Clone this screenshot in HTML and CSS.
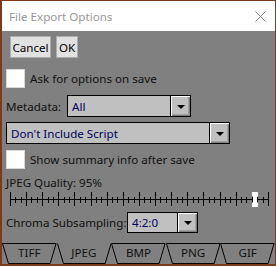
FILE: index.html
```html
<!DOCTYPE html>
<html lang="en">
<head>
  <meta charset="UTF-8">
  <title>File Export Options</title>
  <link rel="stylesheet" href="styles.css">
</head>
<body>
<div class="window">
  <div class="titlebar">
    <span class="title">File Export Options</span>
    <svg class="close" width="11" height="11" viewBox="0 0 11 11">
      <path d="M0.5 0.5 L10.5 10.5 M10.5 0.5 L0.5 10.5" stroke="#8a8a8a" stroke-width="1" fill="none"/>
    </svg>
  </div>

  <div class="content">
    <div class="buttons">
      <button class="btn btn-cancel">Cancel</button>
      <button class="btn btn-ok">OK</button>
    </div>

    <label class="check check-first"><span class="box"></span>Ask for options on save</label>

    <div class="row meta">
      <span class="label-meta">Metadata:</span>
      <div class="select sel-meta"><span class="value">All</span><span class="drop"></span></div>
    </div>

    <div class="row script">
      <div class="select sel-script"><span class="value">Don't Include Script</span><span class="drop"></span></div>
    </div>

    <label class="check check-second"><span class="box"></span>Show summary info after save</label>

    <div class="quality">JPEG Quality: 95%</div>
    <div class="slider">
      <svg class="thumb" width="6" height="15" viewBox="0 0 6 15">
        <polygon points="0,0 6,0 6,4 5,5 5,10 6,11 6,15 0,15 0,11 1,10 1,5 0,4" fill="#fff"/>
      </svg>
    </div>

    <div class="row chroma">
      <span class="label-chroma">Chroma Subsampling:</span>
      <div class="select sel-chroma"><span class="value">4:2:0</span><span class="drop"></span></div>
    </div>
  </div>

  <div class="tabs">
    <div class="tab"><svg viewBox="0 0 55 21" preserveAspectRatio="none"><polyline points="0.5,0.5 6.5,20.5 48.5,20.5 54.5,0.5 0.5,0.5"/></svg><span>TIFF</span></div>
    <div class="tab active"><svg viewBox="0 0 55 21" preserveAspectRatio="none"><polyline points="0.5,0.5 6.5,20.5 48.5,20.5 54.5,0.5"/></svg><span>JPEG</span></div>
    <div class="tab"><svg viewBox="0 0 55 21" preserveAspectRatio="none"><polyline points="0.5,0.5 6.5,20.5 48.5,20.5 54.5,0.5 0.5,0.5"/></svg><span>BMP</span></div>
    <div class="tab"><svg viewBox="0 0 55 21" preserveAspectRatio="none"><polyline points="0.5,0.5 6.5,20.5 48.5,20.5 54.5,0.5 0.5,0.5"/></svg><span>PNG</span></div>
    <div class="tab"><svg viewBox="0 0 55 21" preserveAspectRatio="none"><polyline points="0.5,0.5 6.5,20.5 48.5,20.5 54.5,0.5 0.5,0.5"/></svg><span>GIF</span></div>
  </div>
</div>
</body>
</html>
```

FILE: styles.css
```css
body { margin: 0; background: #7a3a1c; font: 11.6px "Noto Sans", sans-serif; color: #111; white-space: nowrap; }

.window { margin: 1px 0 0 2px; width: 273px; height: 263px; background: #808080; display: flex; flex-direction: column; }

.titlebar { height: 30px; flex: none; background: #fff; display: flex; align-items: center; justify-content: space-between; padding: 0 9px 0 7px; color: #999; }
.close { display: block; }

.content { padding-left: 4px; display: flex; flex-direction: column; align-items: flex-start; }

.buttons { margin: 5px 0 0 4px; display: flex; gap: 5px; }
.btn { font: inherit; color: #000; height: 22px; padding: 0; background: #e1e1e1; border: 1px solid #adadad; }
.btn-cancel { width: 41px; }
.btn-ok { width: 22px; }

.check { height: 19px; display: flex; align-items: center; gap: 5px; }
.check-first { margin-top: 11px; }
.check-second { margin-top: 6px; }
.box { width: 19px; height: 19px; box-sizing: border-box; background: #fff; border: 1px solid #d8d8d8; }

.row { display: flex; align-items: center; }
.meta { margin-top: 7px; height: 22px; }
.script { margin-top: 5px; height: 22px; }
.chroma { margin-top: 5px; height: 21px; }
.label-meta { width: 61px; flex: none; }
.label-chroma { width: 121px; flex: none; }

.select { box-sizing: border-box; height: 100%; border: 1px solid #000; background: #c0c0c0; display: flex; color: #00005a; }
.sel-meta { width: 124px; }
.sel-script { width: 224px; }
.sel-chroma { width: 71px; }
.value { flex: 1; padding-left: 4px; display: flex; align-items: center; }
.drop { width: 19px; border-left: 1px solid #000; background: #c0c0c0; box-shadow: inset 1px 1px #fff, inset -1px -1px #808080, inset -2px -2px #a0a0a0; display: flex; align-items: center; justify-content: center; }
.drop::after { content: ""; border-left: 4px solid transparent; border-right: 4px solid transparent; border-top: 4px solid #000; margin-top: 1px; }

.quality { margin-top: 7px; height: 14px; line-height: 14px; }

.slider {
  margin: 2px 0 0 4px; width: 259px; height: 15px; position: relative;
  background:
    linear-gradient(#000, #000) 0 7px / 100% 1px no-repeat,
    repeating-linear-gradient(90deg, #000 0 1px, transparent 1px 16.125px) 0 0 / 100% 14px no-repeat,
    repeating-linear-gradient(90deg, #000 0 1px, transparent 1px 5.375px) 0 5px / 100% 6px no-repeat;
}
.thumb { position: absolute; left: 242px; top: 0; }

.tabs { margin-top: 10px; height: 21px; display: flex; }
.tab { flex: 1; position: relative; display: flex; align-items: center; justify-content: center; padding-bottom: 2px; box-sizing: border-box; }
.tab svg { position: absolute; left: 0; top: 0; width: 100%; height: 100%; fill: none; stroke: #000; stroke-width: 1; }
.tab span { position: relative; }
```
